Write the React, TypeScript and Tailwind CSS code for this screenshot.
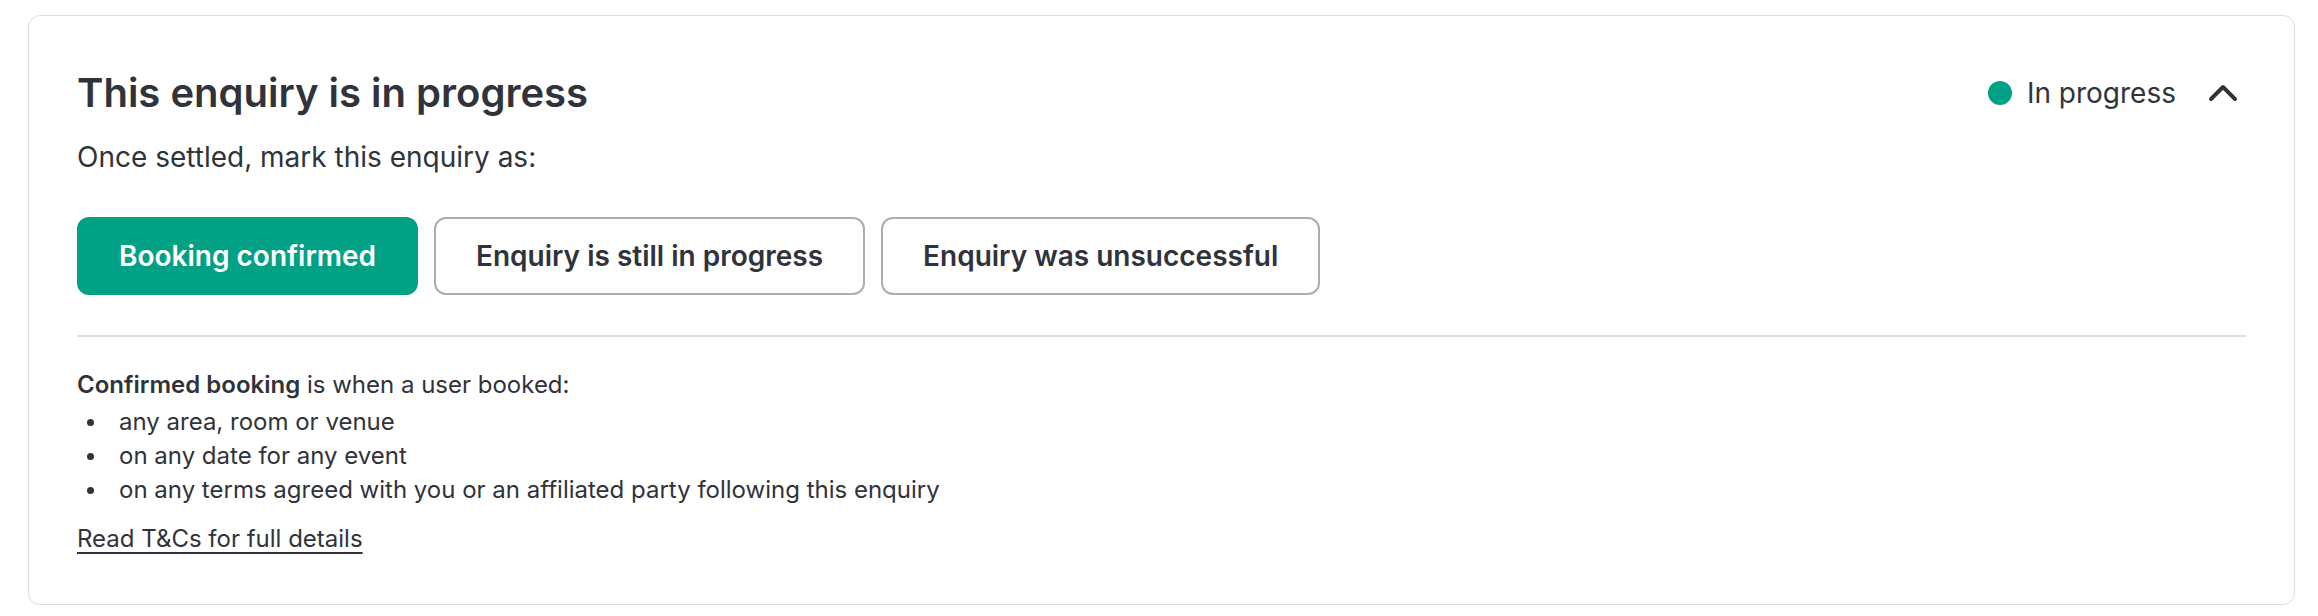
import React from 'react';

const bullets = [
    'any area, room or venue',
    'on any date for any event',
    'on any terms agreed with you or an affiliated party following this enquiry',
];

const App: React.FC = () => {
    return (
        <div className="min-h-screen bg-white pt-[15px] pl-[28px] pr-[23px] font-['Inter',sans-serif] text-[#30333a]">
            <div className="rounded-[12px] border border-[#dcdde2] px-[48px] pt-[53px] pb-[48px]">
                {/* Header */}
                <div className="flex items-center justify-between">
                    <h2 className="text-[40px] leading-[48px] font-semibold">This enquiry is in progress</h2>
                    <div className="flex items-center">
                        <span className="h-[24px] w-[24px] rounded-full bg-[#00a185]"></span>
                        <span className="ml-[15px] text-[28px] leading-[40px]">In progress</span>
                        <button className="ml-[29px] mr-[5px] text-[#30333a]">
                            <svg width="36" height="36" viewBox="0 0 24 24" fill="none" stroke="currentColor" strokeWidth="2.6" strokeLinecap="round" strokeLinejoin="round">
                                <path d="M4 16l8-8 8 8" />
                            </svg>
                        </button>
                    </div>
                </div>

                <p className="mt-[20px] text-[28px] leading-[40px]">Once settled, mark this enquiry as:</p>

                {/* Actions */}
                <div className="mt-[40px] flex gap-[16px]">
                    <button className="h-[78px] rounded-[12px] border-2 border-[#00a185] bg-[#00a185] px-[40px] text-[28px] font-semibold text-white">
                        Booking confirmed
                    </button>
                    <button className="h-[78px] rounded-[12px] border-2 border-[#aaacb6] bg-white px-[40px] text-[28px] font-semibold">
                        Enquiry is still in progress
                    </button>
                    <button className="h-[78px] rounded-[12px] border-2 border-[#aaacb6] bg-white px-[40px] text-[28px] font-semibold">
                        Enquiry was unsuccessful
                    </button>
                </div>

                <div className="mt-[40px] h-[2px] bg-[#dcdde2]"></div>

                {/* Terms */}
                <div className="mt-[31px] text-[24px] leading-[34px]">
                    <p>
                        <span className="font-semibold">Confirmed booking</span> is when a user booked:
                    </p>
                    <ul className="mt-[3px]">
                        {bullets.map(item => (
                            <li key={item} className="flex items-center">
                                <span className="ml-[10px] mr-[25px] h-[7px] w-[7px] rounded-full bg-[#30333a]"></span>
                                {item}
                            </li>
                        ))}
                    </ul>
                    <a href="#" className="mt-[15px] inline-block underline decoration-[2px] underline-offset-[5px]">
                        Read T&amp;Cs for full details
                    </a>
                </div>
            </div>
        </div>
    );
};

export default App;
